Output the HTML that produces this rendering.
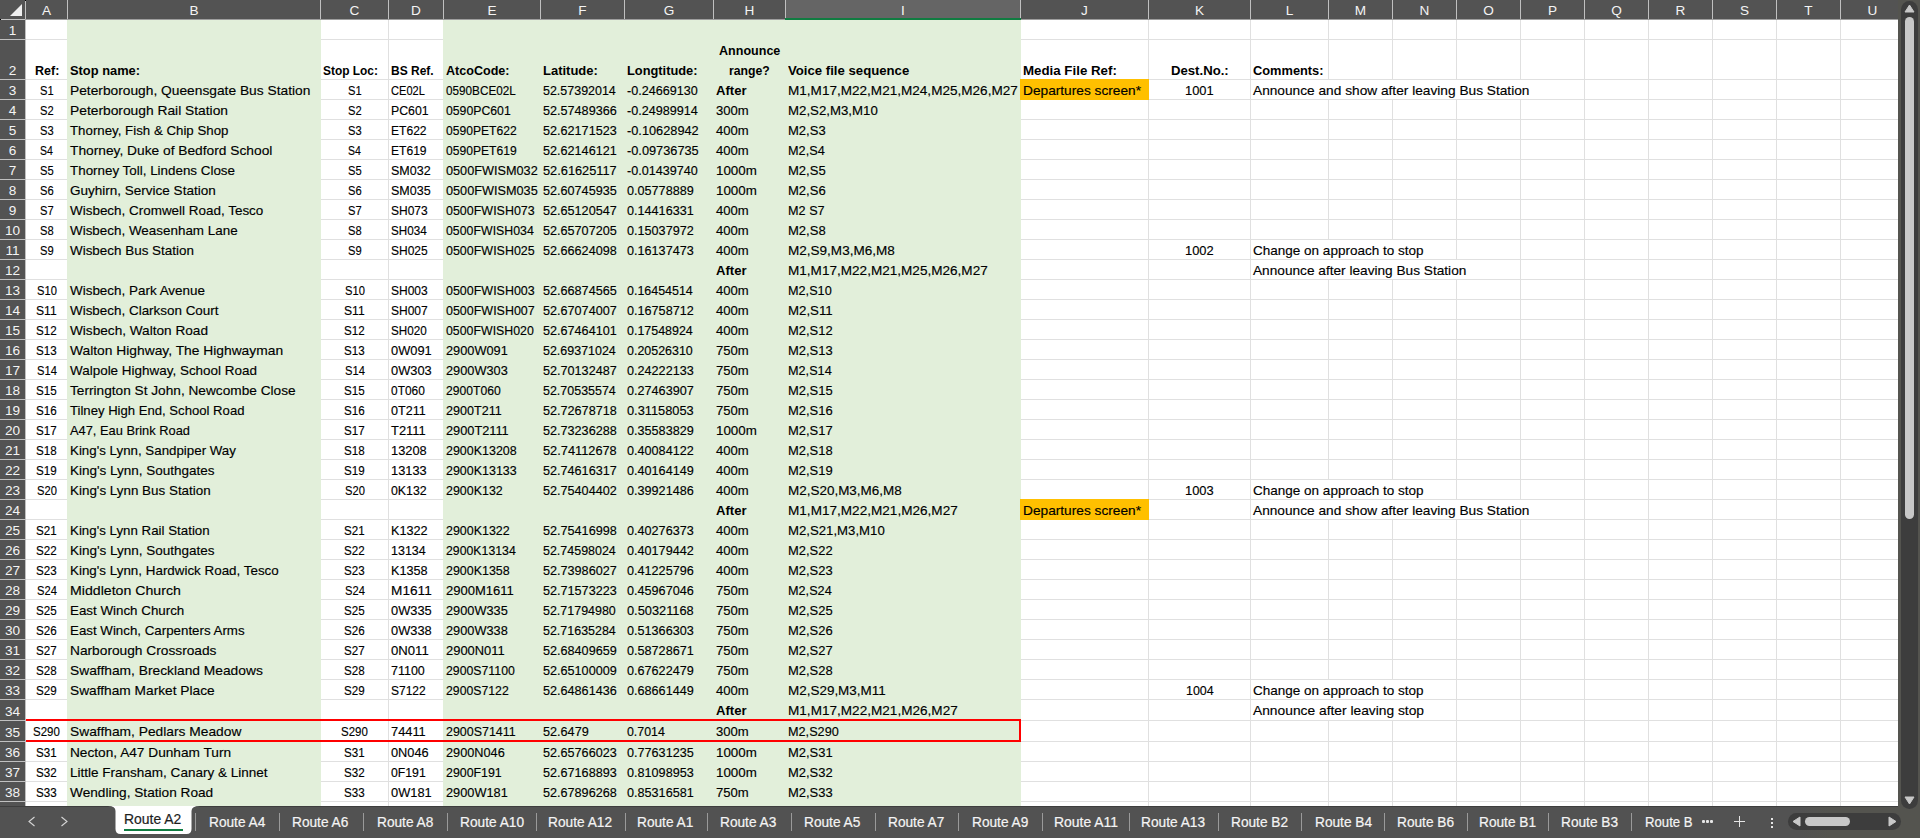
<!DOCTYPE html>
<html><head><meta charset="utf-8"><style>
*{margin:0;padding:0;box-sizing:border-box}
html,body{width:1920px;height:838px;overflow:hidden;background:#505050}
body{position:relative;font-family:"Liberation Sans", sans-serif}
body>div,#tabs>div{position:absolute}
.hl{position:absolute;top:0;height:19px;line-height:20px;text-align:center;color:#f4f4f4;font-size:13.6px}
.rn{position:absolute;left:0;width:25px;height:20px;line-height:20px;text-align:center;color:#f4f4f4;font-size:13.6px}
.ct{position:absolute;height:20px;line-height:20px;white-space:nowrap;color:#000;font-size:13.6px;transform-origin:0 0}
.ct{-webkit-text-stroke:0.15px #000}
.ct.b{font-weight:bold;-webkit-text-stroke:0}
.cc{text-align:center}
.tab{position:absolute;height:32px;line-height:32px;white-space:nowrap;color:#f4f4f4;font-size:14px;transform-origin:0 0}
.tab{-webkit-text-stroke:0.2px #f4f4f4}
.tab.act{color:#1e1e1e;line-height:26px;-webkit-text-stroke:0.2px #1e1e1e}
</style></head>
<body>
<div style="left:0px;top:0px;width:1898px;height:20px;background:#535353;"></div>
<div style="left:0px;top:20px;width:26px;height:786px;background:#535353;"></div>
<div style="left:26px;top:20px;width:1872px;height:786px;background:#ffffff;"></div>
<div style="left:26px;top:39px;width:1872px;height:1px;background:#e0e0e0;"></div>
<div style="left:26px;top:79px;width:1872px;height:1px;background:#e0e0e0;"></div>
<div style="left:26px;top:99px;width:1872px;height:1px;background:#e0e0e0;"></div>
<div style="left:26px;top:119px;width:1872px;height:1px;background:#e0e0e0;"></div>
<div style="left:26px;top:139px;width:1872px;height:1px;background:#e0e0e0;"></div>
<div style="left:26px;top:159px;width:1872px;height:1px;background:#e0e0e0;"></div>
<div style="left:26px;top:179px;width:1872px;height:1px;background:#e0e0e0;"></div>
<div style="left:26px;top:199px;width:1872px;height:1px;background:#e0e0e0;"></div>
<div style="left:26px;top:219px;width:1872px;height:1px;background:#e0e0e0;"></div>
<div style="left:26px;top:239px;width:1872px;height:1px;background:#e0e0e0;"></div>
<div style="left:26px;top:259px;width:1872px;height:1px;background:#e0e0e0;"></div>
<div style="left:26px;top:279px;width:1872px;height:1px;background:#e0e0e0;"></div>
<div style="left:26px;top:299px;width:1872px;height:1px;background:#e0e0e0;"></div>
<div style="left:26px;top:319px;width:1872px;height:1px;background:#e0e0e0;"></div>
<div style="left:26px;top:339px;width:1872px;height:1px;background:#e0e0e0;"></div>
<div style="left:26px;top:359px;width:1872px;height:1px;background:#e0e0e0;"></div>
<div style="left:26px;top:379px;width:1872px;height:1px;background:#e0e0e0;"></div>
<div style="left:26px;top:399px;width:1872px;height:1px;background:#e0e0e0;"></div>
<div style="left:26px;top:419px;width:1872px;height:1px;background:#e0e0e0;"></div>
<div style="left:26px;top:439px;width:1872px;height:1px;background:#e0e0e0;"></div>
<div style="left:26px;top:459px;width:1872px;height:1px;background:#e0e0e0;"></div>
<div style="left:26px;top:479px;width:1872px;height:1px;background:#e0e0e0;"></div>
<div style="left:26px;top:499px;width:1872px;height:1px;background:#e0e0e0;"></div>
<div style="left:26px;top:519px;width:1872px;height:1px;background:#e0e0e0;"></div>
<div style="left:26px;top:539px;width:1872px;height:1px;background:#e0e0e0;"></div>
<div style="left:26px;top:559px;width:1872px;height:1px;background:#e0e0e0;"></div>
<div style="left:26px;top:579px;width:1872px;height:1px;background:#e0e0e0;"></div>
<div style="left:26px;top:599px;width:1872px;height:1px;background:#e0e0e0;"></div>
<div style="left:26px;top:619px;width:1872px;height:1px;background:#e0e0e0;"></div>
<div style="left:26px;top:639px;width:1872px;height:1px;background:#e0e0e0;"></div>
<div style="left:26px;top:659px;width:1872px;height:1px;background:#e0e0e0;"></div>
<div style="left:26px;top:679px;width:1872px;height:1px;background:#e0e0e0;"></div>
<div style="left:26px;top:699px;width:1872px;height:1px;background:#e0e0e0;"></div>
<div style="left:26px;top:720px;width:1872px;height:1px;background:#e0e0e0;"></div>
<div style="left:26px;top:741px;width:1872px;height:1px;background:#e0e0e0;"></div>
<div style="left:26px;top:761px;width:1872px;height:1px;background:#e0e0e0;"></div>
<div style="left:26px;top:781px;width:1872px;height:1px;background:#e0e0e0;"></div>
<div style="left:26px;top:801px;width:1872px;height:1px;background:#e0e0e0;"></div>
<div style="left:67px;top:20px;width:1px;height:786px;background:#e0e0e0;"></div>
<div style="left:320px;top:20px;width:1px;height:786px;background:#e0e0e0;"></div>
<div style="left:388px;top:20px;width:1px;height:786px;background:#e0e0e0;"></div>
<div style="left:443px;top:20px;width:1px;height:786px;background:#e0e0e0;"></div>
<div style="left:540px;top:20px;width:1px;height:786px;background:#e0e0e0;"></div>
<div style="left:624px;top:20px;width:1px;height:786px;background:#e0e0e0;"></div>
<div style="left:713px;top:20px;width:1px;height:786px;background:#e0e0e0;"></div>
<div style="left:785px;top:20px;width:1px;height:786px;background:#e0e0e0;"></div>
<div style="left:1020px;top:20px;width:1px;height:786px;background:#e0e0e0;"></div>
<div style="left:1148px;top:20px;width:1px;height:786px;background:#e0e0e0;"></div>
<div style="left:1250px;top:20px;width:1px;height:786px;background:#e0e0e0;"></div>
<div style="left:1328px;top:20px;width:1px;height:786px;background:#e0e0e0;"></div>
<div style="left:1392px;top:20px;width:1px;height:786px;background:#e0e0e0;"></div>
<div style="left:1456px;top:20px;width:1px;height:786px;background:#e0e0e0;"></div>
<div style="left:1520px;top:20px;width:1px;height:786px;background:#e0e0e0;"></div>
<div style="left:1584px;top:20px;width:1px;height:786px;background:#e0e0e0;"></div>
<div style="left:1648px;top:20px;width:1px;height:786px;background:#e0e0e0;"></div>
<div style="left:1712px;top:20px;width:1px;height:786px;background:#e0e0e0;"></div>
<div style="left:1776px;top:20px;width:1px;height:786px;background:#e0e0e0;"></div>
<div style="left:1840px;top:20px;width:1px;height:786px;background:#e0e0e0;"></div>
<div style="left:1328px;top:80px;width:1px;height:19px;background:#ffffff;"></div>
<div style="left:1392px;top:80px;width:1px;height:19px;background:#ffffff;"></div>
<div style="left:1456px;top:80px;width:1px;height:19px;background:#ffffff;"></div>
<div style="left:1520px;top:80px;width:1px;height:19px;background:#ffffff;"></div>
<div style="left:1328px;top:240px;width:1px;height:19px;background:#ffffff;"></div>
<div style="left:1392px;top:240px;width:1px;height:19px;background:#ffffff;"></div>
<div style="left:1328px;top:260px;width:1px;height:19px;background:#ffffff;"></div>
<div style="left:1392px;top:260px;width:1px;height:19px;background:#ffffff;"></div>
<div style="left:1456px;top:260px;width:1px;height:19px;background:#ffffff;"></div>
<div style="left:1328px;top:480px;width:1px;height:19px;background:#ffffff;"></div>
<div style="left:1392px;top:480px;width:1px;height:19px;background:#ffffff;"></div>
<div style="left:1328px;top:500px;width:1px;height:19px;background:#ffffff;"></div>
<div style="left:1392px;top:500px;width:1px;height:19px;background:#ffffff;"></div>
<div style="left:1456px;top:500px;width:1px;height:19px;background:#ffffff;"></div>
<div style="left:1520px;top:500px;width:1px;height:19px;background:#ffffff;"></div>
<div style="left:1328px;top:680px;width:1px;height:19px;background:#ffffff;"></div>
<div style="left:1392px;top:680px;width:1px;height:19px;background:#ffffff;"></div>
<div style="left:1328px;top:700px;width:1px;height:20px;background:#ffffff;"></div>
<div style="left:1392px;top:700px;width:1px;height:20px;background:#ffffff;"></div>
<div style="left:67px;top:20px;width:254px;height:786px;background:#e2efda;"></div>
<div style="left:443px;top:20px;width:578px;height:786px;background:#e2efda;"></div>
<div style="left:1020px;top:79px;width:129px;height:21px;background:#ffc000;"></div>
<div style="left:1020px;top:499px;width:129px;height:21px;background:#ffc000;"></div>
<div style="left:26px;top:719px;width:995px;height:2px;background:#ff0000;"></div>
<div style="left:26px;top:740px;width:995px;height:2px;background:#ff0000;"></div>
<div style="left:1019px;top:719px;width:2px;height:23px;background:#ff0000;"></div>
<div style="left:785px;top:0px;width:235px;height:19px;background:#656565;"></div>
<div style="left:67px;top:0px;width:1px;height:19px;background:#c0c0c0;"></div>
<div class="hl" style="top:1px;left:26px;width:41px">A</div>
<div style="left:320px;top:0px;width:1px;height:19px;background:#c0c0c0;"></div>
<div class="hl" style="top:1px;left:68px;width:252px">B</div>
<div style="left:388px;top:0px;width:1px;height:19px;background:#c0c0c0;"></div>
<div class="hl" style="top:1px;left:321px;width:67px">C</div>
<div style="left:443px;top:0px;width:1px;height:19px;background:#c0c0c0;"></div>
<div class="hl" style="top:1px;left:389px;width:54px">D</div>
<div style="left:540px;top:0px;width:1px;height:19px;background:#c0c0c0;"></div>
<div class="hl" style="top:1px;left:444px;width:96px">E</div>
<div style="left:624px;top:0px;width:1px;height:19px;background:#c0c0c0;"></div>
<div class="hl" style="top:1px;left:541px;width:83px">F</div>
<div style="left:713px;top:0px;width:1px;height:19px;background:#c0c0c0;"></div>
<div class="hl" style="top:1px;left:625px;width:88px">G</div>
<div style="left:785px;top:0px;width:1px;height:19px;background:#c0c0c0;"></div>
<div class="hl" style="top:1px;left:714px;width:71px">H</div>
<div style="left:1020px;top:0px;width:1px;height:19px;background:#c0c0c0;"></div>
<div class="hl" style="top:1px;left:786px;width:234px">I</div>
<div style="left:1148px;top:0px;width:1px;height:19px;background:#c0c0c0;"></div>
<div class="hl" style="top:1px;left:1021px;width:127px">J</div>
<div style="left:1250px;top:0px;width:1px;height:19px;background:#c0c0c0;"></div>
<div class="hl" style="top:1px;left:1149px;width:101px">K</div>
<div style="left:1328px;top:0px;width:1px;height:19px;background:#c0c0c0;"></div>
<div class="hl" style="top:1px;left:1251px;width:77px">L</div>
<div style="left:1392px;top:0px;width:1px;height:19px;background:#c0c0c0;"></div>
<div class="hl" style="top:1px;left:1329px;width:63px">M</div>
<div style="left:1456px;top:0px;width:1px;height:19px;background:#c0c0c0;"></div>
<div class="hl" style="top:1px;left:1393px;width:63px">N</div>
<div style="left:1520px;top:0px;width:1px;height:19px;background:#c0c0c0;"></div>
<div class="hl" style="top:1px;left:1457px;width:63px">O</div>
<div style="left:1584px;top:0px;width:1px;height:19px;background:#c0c0c0;"></div>
<div class="hl" style="top:1px;left:1521px;width:63px">P</div>
<div style="left:1648px;top:0px;width:1px;height:19px;background:#c0c0c0;"></div>
<div class="hl" style="top:1px;left:1585px;width:63px">Q</div>
<div style="left:1712px;top:0px;width:1px;height:19px;background:#c0c0c0;"></div>
<div class="hl" style="top:1px;left:1649px;width:63px">R</div>
<div style="left:1776px;top:0px;width:1px;height:19px;background:#c0c0c0;"></div>
<div class="hl" style="top:1px;left:1713px;width:63px">S</div>
<div style="left:1840px;top:0px;width:1px;height:19px;background:#c0c0c0;"></div>
<div class="hl" style="top:1px;left:1777px;width:63px">T</div>
<div class="hl" style="top:1px;left:1841px;width:63px">U</div>
<div style="left:25px;top:0px;width:1px;height:19px;background:#c0c0c0;"></div>
<div style="left:0px;top:19px;width:1898px;height:1px;background:#9e9e9e;"></div>
<div style="left:785px;top:18px;width:236px;height:2px;background:#107c41;"></div>
<div style="left:0px;top:19px;width:25px;height:1px;background:#c4c4c4;"></div>
<div style="left:25px;top:0px;width:1px;height:1px;background:#000000;"></div>
<div style="left:0px;top:19px;width:1px;height:1px;background:#000000;"></div>
<svg style="position:absolute;left:0;top:0" width="25" height="19"><polygon points="10,16 22,16 22,4" fill="#efefef"/></svg>
<div style="left:0px;top:39px;width:25px;height:1px;background:#c0c0c0;"></div>
<div class="rn" style="top:21px">1</div>
<div style="left:0px;top:79px;width:25px;height:1px;background:#c0c0c0;"></div>
<div class="rn" style="top:61px">2</div>
<div style="left:0px;top:99px;width:25px;height:1px;background:#c0c0c0;"></div>
<div class="rn" style="top:81px">3</div>
<div style="left:0px;top:119px;width:25px;height:1px;background:#c0c0c0;"></div>
<div class="rn" style="top:101px">4</div>
<div style="left:0px;top:139px;width:25px;height:1px;background:#c0c0c0;"></div>
<div class="rn" style="top:121px">5</div>
<div style="left:0px;top:159px;width:25px;height:1px;background:#c0c0c0;"></div>
<div class="rn" style="top:141px">6</div>
<div style="left:0px;top:179px;width:25px;height:1px;background:#c0c0c0;"></div>
<div class="rn" style="top:161px">7</div>
<div style="left:0px;top:199px;width:25px;height:1px;background:#c0c0c0;"></div>
<div class="rn" style="top:181px">8</div>
<div style="left:0px;top:219px;width:25px;height:1px;background:#c0c0c0;"></div>
<div class="rn" style="top:201px">9</div>
<div style="left:0px;top:239px;width:25px;height:1px;background:#c0c0c0;"></div>
<div class="rn" style="top:221px">10</div>
<div style="left:0px;top:259px;width:25px;height:1px;background:#c0c0c0;"></div>
<div class="rn" style="top:241px">11</div>
<div style="left:0px;top:279px;width:25px;height:1px;background:#c0c0c0;"></div>
<div class="rn" style="top:261px">12</div>
<div style="left:0px;top:299px;width:25px;height:1px;background:#c0c0c0;"></div>
<div class="rn" style="top:281px">13</div>
<div style="left:0px;top:319px;width:25px;height:1px;background:#c0c0c0;"></div>
<div class="rn" style="top:301px">14</div>
<div style="left:0px;top:339px;width:25px;height:1px;background:#c0c0c0;"></div>
<div class="rn" style="top:321px">15</div>
<div style="left:0px;top:359px;width:25px;height:1px;background:#c0c0c0;"></div>
<div class="rn" style="top:341px">16</div>
<div style="left:0px;top:379px;width:25px;height:1px;background:#c0c0c0;"></div>
<div class="rn" style="top:361px">17</div>
<div style="left:0px;top:399px;width:25px;height:1px;background:#c0c0c0;"></div>
<div class="rn" style="top:381px">18</div>
<div style="left:0px;top:419px;width:25px;height:1px;background:#c0c0c0;"></div>
<div class="rn" style="top:401px">19</div>
<div style="left:0px;top:439px;width:25px;height:1px;background:#c0c0c0;"></div>
<div class="rn" style="top:421px">20</div>
<div style="left:0px;top:459px;width:25px;height:1px;background:#c0c0c0;"></div>
<div class="rn" style="top:441px">21</div>
<div style="left:0px;top:479px;width:25px;height:1px;background:#c0c0c0;"></div>
<div class="rn" style="top:461px">22</div>
<div style="left:0px;top:499px;width:25px;height:1px;background:#c0c0c0;"></div>
<div class="rn" style="top:481px">23</div>
<div style="left:0px;top:519px;width:25px;height:1px;background:#c0c0c0;"></div>
<div class="rn" style="top:501px">24</div>
<div style="left:0px;top:539px;width:25px;height:1px;background:#c0c0c0;"></div>
<div class="rn" style="top:521px">25</div>
<div style="left:0px;top:559px;width:25px;height:1px;background:#c0c0c0;"></div>
<div class="rn" style="top:541px">26</div>
<div style="left:0px;top:579px;width:25px;height:1px;background:#c0c0c0;"></div>
<div class="rn" style="top:561px">27</div>
<div style="left:0px;top:599px;width:25px;height:1px;background:#c0c0c0;"></div>
<div class="rn" style="top:581px">28</div>
<div style="left:0px;top:619px;width:25px;height:1px;background:#c0c0c0;"></div>
<div class="rn" style="top:601px">29</div>
<div style="left:0px;top:639px;width:25px;height:1px;background:#c0c0c0;"></div>
<div class="rn" style="top:621px">30</div>
<div style="left:0px;top:659px;width:25px;height:1px;background:#c0c0c0;"></div>
<div class="rn" style="top:641px">31</div>
<div style="left:0px;top:679px;width:25px;height:1px;background:#c0c0c0;"></div>
<div class="rn" style="top:661px">32</div>
<div style="left:0px;top:699px;width:25px;height:1px;background:#c0c0c0;"></div>
<div class="rn" style="top:681px">33</div>
<div style="left:0px;top:720px;width:25px;height:1px;background:#c0c0c0;"></div>
<div class="rn" style="top:702px">34</div>
<div style="left:0px;top:741px;width:25px;height:1px;background:#c0c0c0;"></div>
<div class="rn" style="top:723px">35</div>
<div style="left:0px;top:761px;width:25px;height:1px;background:#c0c0c0;"></div>
<div class="rn" style="top:743px">36</div>
<div style="left:0px;top:781px;width:25px;height:1px;background:#c0c0c0;"></div>
<div class="rn" style="top:763px">37</div>
<div style="left:0px;top:801px;width:25px;height:1px;background:#c0c0c0;"></div>
<div class="rn" style="top:783px">38</div>
<div class="rn" style="top:803px">39</div>
<div style="left:25px;top:20px;width:1px;height:786px;background:#c0c0c0;"></div>
<div class="ct b" style="left:34.60px;top:61px;transform:scaleX(0.9188)">Ref:</div>
<div class="ct b" style="left:70.03px;top:61px;transform:scaleX(0.9457)">Stop name:</div>
<div class="ct b" style="left:323.06px;top:61px;transform:scaleX(0.8770)">Stop Loc:</div>
<div class="ct b" style="left:390.60px;top:61px;transform:scaleX(0.8830)">BS Ref.</div>
<div class="ct b" style="left:446.09px;top:61px;transform:scaleX(0.9239)">AtcoCode:</div>
<div class="ct b" style="left:542.53px;top:61px;transform:scaleX(0.9541)">Latitude:</div>
<div class="ct b" style="left:626.54px;top:61px;transform:scaleX(0.9432)">Longtitude:</div>
<div class="ct b" style="left:718.62px;top:41px;transform:scaleX(0.9231)">Announce</div>
<div class="ct b" style="left:729.25px;top:61px;transform:scaleX(0.8996)">range?</div>
<div class="ct b" style="left:788.31px;top:61px;transform:scaleX(0.9689)">Voice file sequence</div>
<div class="ct b" style="left:1022.51px;top:61px;transform:scaleX(0.9780)">Media File Ref:</div>
<div class="ct b" style="left:1170.90px;top:61px;transform:scaleX(0.9672)">Dest.No.:</div>
<div class="ct b" style="left:1252.87px;top:61px;transform:scaleX(0.9428)">Comments:</div>
<div class="ct" style="left:39.90px;top:81px;transform:scaleX(0.8216)">S1</div>
<div class="ct" style="left:70.27px;top:81px;transform:scaleX(1.0128)">Peterborough, Queensgate Bus Station</div>
<div class="ct" style="left:347.90px;top:81px;transform:scaleX(0.8216)">S1</div>
<div class="ct" style="left:390.84px;top:81px;transform:scaleX(0.8142)">CE02L</div>
<div class="ct" style="left:445.94px;top:81px;transform:scaleX(0.8633)">0590BCE02L</div>
<div class="ct" style="left:542.90px;top:81px;transform:scaleX(0.9171)">52.57392014</div>
<div class="ct" style="left:626.84px;top:81px;transform:scaleX(0.9273)">-0.24669130</div>
<div class="ct b" style="left:716.07px;top:81px;transform:scaleX(0.9636)">After</div>
<div class="ct" style="left:788.29px;top:81px;transform:scaleX(0.9971)">M1,M17,M22,M21,M24,M25,M26,M27</div>
<div class="ct" style="left:1023.28px;top:81px;transform:scaleX(1.0077)">Departures screen*</div>
<div class="ct" style="left:1184.95px;top:81px;transform:scaleX(0.9484)">1001</div>
<div class="ct" style="left:1253.37px;top:81px;transform:scaleX(1.0077)">Announce and show after leaving Bus Station</div>
<div class="ct" style="left:39.90px;top:101px;transform:scaleX(0.8216)">S2</div>
<div class="ct" style="left:70.27px;top:101px;transform:scaleX(1.0150)">Peterborough Rail Station</div>
<div class="ct" style="left:347.90px;top:101px;transform:scaleX(0.8216)">S2</div>
<div class="ct" style="left:391.39px;top:101px;transform:scaleX(0.9049)">PC601</div>
<div class="ct" style="left:445.92px;top:101px;transform:scaleX(0.9011)">0590PC601</div>
<div class="ct" style="left:542.89px;top:101px;transform:scaleX(0.9287)">52.57489366</div>
<div class="ct" style="left:626.84px;top:101px;transform:scaleX(0.9273)">-0.24989914</div>
<div class="ct" style="left:715.90px;top:101px;transform:scaleX(0.9632)">300m</div>
<div class="ct" style="left:788.31px;top:101px;transform:scaleX(0.9737)">M2,S2,M3,M10</div>
<div class="ct" style="left:39.90px;top:121px;transform:scaleX(0.8216)">S3</div>
<div class="ct" style="left:70.10px;top:121px;transform:scaleX(0.9769)">Thorney, Fish &amp; Chip Shop</div>
<div class="ct" style="left:347.90px;top:121px;transform:scaleX(0.8216)">S3</div>
<div class="ct" style="left:391.41px;top:121px;transform:scaleX(0.8885)">ET622</div>
<div class="ct" style="left:445.93px;top:121px;transform:scaleX(0.8909)">0590PET622</div>
<div class="ct" style="left:542.89px;top:121px;transform:scaleX(0.9287)">52.62171523</div>
<div class="ct" style="left:626.83px;top:121px;transform:scaleX(0.9395)">-0.10628942</div>
<div class="ct" style="left:716.10px;top:121px;transform:scaleX(0.9632)">400m</div>
<div class="ct" style="left:788.33px;top:121px;transform:scaleX(0.9595)">M2,S3</div>
<div class="ct" style="left:39.90px;top:141px;transform:scaleX(0.7734)">S4</div>
<div class="ct" style="left:70.09px;top:141px;transform:scaleX(1.0118)">Thorney, Duke of Bedford School</div>
<div class="ct" style="left:347.90px;top:141px;transform:scaleX(0.7734)">S4</div>
<div class="ct" style="left:391.41px;top:141px;transform:scaleX(0.8885)">ET619</div>
<div class="ct" style="left:445.93px;top:141px;transform:scaleX(0.8909)">0590PET619</div>
<div class="ct" style="left:542.89px;top:141px;transform:scaleX(0.9287)">52.62146121</div>
<div class="ct" style="left:626.83px;top:141px;transform:scaleX(0.9395)">-0.09736735</div>
<div class="ct" style="left:716.10px;top:141px;transform:scaleX(0.9632)">400m</div>
<div class="ct" style="left:788.36px;top:141px;transform:scaleX(0.9347)">M2,S4</div>
<div class="ct" style="left:39.90px;top:161px;transform:scaleX(0.8216)">S5</div>
<div class="ct" style="left:70.10px;top:161px;transform:scaleX(0.9851)">Thorney Toll, Lindens Close</div>
<div class="ct" style="left:347.90px;top:161px;transform:scaleX(0.8216)">S5</div>
<div class="ct" style="left:390.83px;top:161px;transform:scaleX(0.9221)">SM032</div>
<div class="ct" style="left:445.90px;top:161px;transform:scaleX(0.9338)">0500FWISM032</div>
<div class="ct" style="left:542.89px;top:161px;transform:scaleX(0.9408)">52.61625117</div>
<div class="ct" style="left:626.84px;top:161px;transform:scaleX(0.9273)">-0.01439740</div>
<div class="ct" style="left:716.38px;top:161px;transform:scaleX(0.9801)">1000m</div>
<div class="ct" style="left:788.33px;top:161px;transform:scaleX(0.9595)">M2,S5</div>
<div class="ct" style="left:39.90px;top:181px;transform:scaleX(0.8216)">S6</div>
<div class="ct" style="left:69.72px;top:181px;transform:scaleX(0.9939)">Guyhirn, Service Station</div>
<div class="ct" style="left:347.90px;top:181px;transform:scaleX(0.8216)">S6</div>
<div class="ct" style="left:390.83px;top:181px;transform:scaleX(0.9221)">SM035</div>
<div class="ct" style="left:445.90px;top:181px;transform:scaleX(0.9338)">0500FWISM035</div>
<div class="ct" style="left:542.89px;top:181px;transform:scaleX(0.9287)">52.60745935</div>
<div class="ct" style="left:626.91px;top:181px;transform:scaleX(0.9290)">0.05778889</div>
<div class="ct" style="left:716.38px;top:181px;transform:scaleX(0.9801)">1000m</div>
<div class="ct" style="left:788.33px;top:181px;transform:scaleX(0.9595)">M2,S6</div>
<div class="ct" style="left:39.90px;top:201px;transform:scaleX(0.8216)">S7</div>
<div class="ct" style="left:70.34px;top:201px;transform:scaleX(0.9893)">Wisbech, Cromwell Road, Tesco</div>
<div class="ct" style="left:347.90px;top:201px;transform:scaleX(0.8216)">S7</div>
<div class="ct" style="left:390.85px;top:201px;transform:scaleX(0.8828)">SH073</div>
<div class="ct" style="left:445.91px;top:201px;transform:scaleX(0.9173)">0500FWISH073</div>
<div class="ct" style="left:542.89px;top:201px;transform:scaleX(0.9287)">52.65120547</div>
<div class="ct" style="left:626.91px;top:201px;transform:scaleX(0.9290)">0.14416331</div>
<div class="ct" style="left:716.10px;top:201px;transform:scaleX(0.9632)">400m</div>
<div class="ct" style="left:788.36px;top:201px;transform:scaleX(0.9330)">M2 S7</div>
<div class="ct" style="left:39.90px;top:221px;transform:scaleX(0.8216)">S8</div>
<div class="ct" style="left:70.34px;top:221px;transform:scaleX(0.9875)">Wisbech, Weasenham Lane</div>
<div class="ct" style="left:347.90px;top:221px;transform:scaleX(0.8216)">S8</div>
<div class="ct" style="left:390.87px;top:221px;transform:scaleX(0.8618)">SH034</div>
<div class="ct" style="left:445.92px;top:221px;transform:scaleX(0.9078)">0500FWISH034</div>
<div class="ct" style="left:542.89px;top:221px;transform:scaleX(0.9287)">52.65707205</div>
<div class="ct" style="left:626.91px;top:221px;transform:scaleX(0.9290)">0.15037972</div>
<div class="ct" style="left:716.10px;top:221px;transform:scaleX(0.9632)">400m</div>
<div class="ct" style="left:788.33px;top:221px;transform:scaleX(0.9595)">M2,S8</div>
<div class="ct" style="left:39.90px;top:241px;transform:scaleX(0.8216)">S9</div>
<div class="ct" style="left:70.34px;top:241px;transform:scaleX(0.9876)">Wisbech Bus Station</div>
<div class="ct" style="left:347.90px;top:241px;transform:scaleX(0.8216)">S9</div>
<div class="ct" style="left:390.85px;top:241px;transform:scaleX(0.8828)">SH025</div>
<div class="ct" style="left:445.91px;top:241px;transform:scaleX(0.9173)">0500FWISH025</div>
<div class="ct" style="left:542.89px;top:241px;transform:scaleX(0.9287)">52.66624098</div>
<div class="ct" style="left:626.91px;top:241px;transform:scaleX(0.9290)">0.16137473</div>
<div class="ct" style="left:716.10px;top:241px;transform:scaleX(0.9632)">400m</div>
<div class="ct" style="left:788.29px;top:241px;transform:scaleX(0.9952)">M2,S9,M3,M6,M8</div>
<div class="ct" style="left:1184.95px;top:241px;transform:scaleX(0.9484)">1002</div>
<div class="ct" style="left:1252.71px;top:241px;transform:scaleX(0.9940)">Change on approach to stop</div>
<div class="ct b" style="left:716.07px;top:261px;transform:scaleX(0.9636)">After</div>
<div class="ct" style="left:788.29px;top:261px;transform:scaleX(0.9977)">M1,M17,M22,M21,M25,M26,M27</div>
<div class="ct" style="left:1253.37px;top:261px;transform:scaleX(1.0046)">Announce after leaving Bus Station</div>
<div class="ct" style="left:37.40px;top:281px;transform:scaleX(0.8202)">S10</div>
<div class="ct" style="left:70.34px;top:281px;transform:scaleX(0.9887)">Wisbech, Park Avenue</div>
<div class="ct" style="left:345.40px;top:281px;transform:scaleX(0.8202)">S10</div>
<div class="ct" style="left:390.85px;top:281px;transform:scaleX(0.8828)">SH003</div>
<div class="ct" style="left:445.91px;top:281px;transform:scaleX(0.9173)">0500FWISH003</div>
<div class="ct" style="left:542.89px;top:281px;transform:scaleX(0.9287)">52.66874565</div>
<div class="ct" style="left:626.91px;top:281px;transform:scaleX(0.9162)">0.16454514</div>
<div class="ct" style="left:716.10px;top:281px;transform:scaleX(0.9632)">400m</div>
<div class="ct" style="left:788.36px;top:281px;transform:scaleX(0.9333)">M2,S10</div>
<div class="ct" style="left:36.40px;top:301px;transform:scaleX(0.8931)">S11</div>
<div class="ct" style="left:70.34px;top:301px;transform:scaleX(0.9878)">Wisbech, Clarkson Court</div>
<div class="ct" style="left:344.40px;top:301px;transform:scaleX(0.8931)">S11</div>
<div class="ct" style="left:390.85px;top:301px;transform:scaleX(0.8828)">SH007</div>
<div class="ct" style="left:445.91px;top:301px;transform:scaleX(0.9173)">0500FWISH007</div>
<div class="ct" style="left:542.89px;top:301px;transform:scaleX(0.9287)">52.67074007</div>
<div class="ct" style="left:626.91px;top:301px;transform:scaleX(0.9290)">0.16758712</div>
<div class="ct" style="left:716.10px;top:301px;transform:scaleX(0.9632)">400m</div>
<div class="ct" style="left:788.31px;top:301px;transform:scaleX(0.9756)">M2,S11</div>
<div class="ct" style="left:36.40px;top:321px;transform:scaleX(0.8549)">S12</div>
<div class="ct" style="left:70.34px;top:321px;transform:scaleX(1.0015)">Wisbech, Walton Road</div>
<div class="ct" style="left:344.40px;top:321px;transform:scaleX(0.8549)">S12</div>
<div class="ct" style="left:390.87px;top:321px;transform:scaleX(0.8618)">SH020</div>
<div class="ct" style="left:445.92px;top:321px;transform:scaleX(0.9078)">0500FWISH020</div>
<div class="ct" style="left:542.89px;top:321px;transform:scaleX(0.9287)">52.67464101</div>
<div class="ct" style="left:626.91px;top:321px;transform:scaleX(0.9162)">0.17548924</div>
<div class="ct" style="left:716.10px;top:321px;transform:scaleX(0.9632)">400m</div>
<div class="ct" style="left:788.34px;top:321px;transform:scaleX(0.9539)">M2,S12</div>
<div class="ct" style="left:36.40px;top:341px;transform:scaleX(0.8549)">S13</div>
<div class="ct" style="left:70.34px;top:341px;transform:scaleX(1.0156)">Walton Highway, The Highwayman</div>
<div class="ct" style="left:344.40px;top:341px;transform:scaleX(0.8549)">S13</div>
<div class="ct" style="left:390.90px;top:341px;transform:scaleX(0.9456)">0W091</div>
<div class="ct" style="left:445.76px;top:341px;transform:scaleX(0.9388)">2900W091</div>
<div class="ct" style="left:542.90px;top:341px;transform:scaleX(0.9171)">52.69371024</div>
<div class="ct" style="left:626.91px;top:341px;transform:scaleX(0.9162)">0.20526310</div>
<div class="ct" style="left:715.73px;top:341px;transform:scaleX(0.9632)">750m</div>
<div class="ct" style="left:788.34px;top:341px;transform:scaleX(0.9539)">M2,S13</div>
<div class="ct" style="left:37.40px;top:361px;transform:scaleX(0.8202)">S14</div>
<div class="ct" style="left:70.34px;top:361px;transform:scaleX(0.9897)">Walpole Highway, School Road</div>
<div class="ct" style="left:345.40px;top:361px;transform:scaleX(0.8202)">S14</div>
<div class="ct" style="left:390.90px;top:361px;transform:scaleX(0.9456)">0W303</div>
<div class="ct" style="left:445.76px;top:361px;transform:scaleX(0.9388)">2900W303</div>
<div class="ct" style="left:542.89px;top:361px;transform:scaleX(0.9287)">52.70132487</div>
<div class="ct" style="left:626.91px;top:361px;transform:scaleX(0.9290)">0.24222133</div>
<div class="ct" style="left:715.73px;top:361px;transform:scaleX(0.9632)">750m</div>
<div class="ct" style="left:788.36px;top:361px;transform:scaleX(0.9333)">M2,S14</div>
<div class="ct" style="left:36.40px;top:381px;transform:scaleX(0.8549)">S15</div>
<div class="ct" style="left:70.09px;top:381px;transform:scaleX(1.0052)">Terrington St John, Newcombe Close</div>
<div class="ct" style="left:344.40px;top:381px;transform:scaleX(0.8549)">S15</div>
<div class="ct" style="left:390.93px;top:381px;transform:scaleX(0.8773)">0T060</div>
<div class="ct" style="left:445.79px;top:381px;transform:scaleX(0.8952)">2900T060</div>
<div class="ct" style="left:542.90px;top:381px;transform:scaleX(0.9171)">52.70535574</div>
<div class="ct" style="left:626.91px;top:381px;transform:scaleX(0.9290)">0.27463907</div>
<div class="ct" style="left:715.73px;top:381px;transform:scaleX(0.9632)">750m</div>
<div class="ct" style="left:788.34px;top:381px;transform:scaleX(0.9539)">M2,S15</div>
<div class="ct" style="left:36.40px;top:401px;transform:scaleX(0.8549)">S16</div>
<div class="ct" style="left:70.11px;top:401px;transform:scaleX(0.9647)">Tilney High End, School Road</div>
<div class="ct" style="left:344.40px;top:401px;transform:scaleX(0.8549)">S16</div>
<div class="ct" style="left:390.91px;top:401px;transform:scaleX(0.9250)">0T211</div>
<div class="ct" style="left:445.77px;top:401px;transform:scaleX(0.9253)">2900T211</div>
<div class="ct" style="left:542.89px;top:401px;transform:scaleX(0.9287)">52.72678718</div>
<div class="ct" style="left:626.90px;top:401px;transform:scaleX(0.9424)">0.31158053</div>
<div class="ct" style="left:715.73px;top:401px;transform:scaleX(0.9632)">750m</div>
<div class="ct" style="left:788.34px;top:401px;transform:scaleX(0.9539)">M2,S16</div>
<div class="ct" style="left:36.40px;top:421px;transform:scaleX(0.8549)">S17</div>
<div class="ct" style="left:70.37px;top:421px;transform:scaleX(0.9449)">A47, Eau Brink Road</div>
<div class="ct" style="left:344.40px;top:421px;transform:scaleX(0.8549)">S17</div>
<div class="ct" style="left:391.11px;top:421px;transform:scaleX(0.9509)">T2111</div>
<div class="ct" style="left:445.76px;top:421px;transform:scaleX(0.9395)">2900T2111</div>
<div class="ct" style="left:542.89px;top:421px;transform:scaleX(0.9287)">52.73236288</div>
<div class="ct" style="left:626.91px;top:421px;transform:scaleX(0.9290)">0.35583829</div>
<div class="ct" style="left:716.38px;top:421px;transform:scaleX(0.9801)">1000m</div>
<div class="ct" style="left:788.34px;top:421px;transform:scaleX(0.9539)">M2,S17</div>
<div class="ct" style="left:36.40px;top:441px;transform:scaleX(0.8549)">S18</div>
<div class="ct" style="left:70.31px;top:441px;transform:scaleX(0.9798)">King&#x27;s Lynn, Sandpiper Way</div>
<div class="ct" style="left:344.40px;top:441px;transform:scaleX(0.8549)">S18</div>
<div class="ct" style="left:391.42px;top:441px;transform:scaleX(0.9437)">13208</div>
<div class="ct" style="left:445.77px;top:441px;transform:scaleX(0.9171)">2900K13208</div>
<div class="ct" style="left:542.89px;top:441px;transform:scaleX(0.9408)">52.74112678</div>
<div class="ct" style="left:626.91px;top:441px;transform:scaleX(0.9290)">0.40084122</div>
<div class="ct" style="left:716.10px;top:441px;transform:scaleX(0.9632)">400m</div>
<div class="ct" style="left:788.34px;top:441px;transform:scaleX(0.9539)">M2,S18</div>
<div class="ct" style="left:36.40px;top:461px;transform:scaleX(0.8549)">S19</div>
<div class="ct" style="left:70.29px;top:461px;transform:scaleX(0.9920)">King&#x27;s Lynn, Southgates</div>
<div class="ct" style="left:344.40px;top:461px;transform:scaleX(0.8549)">S19</div>
<div class="ct" style="left:391.42px;top:461px;transform:scaleX(0.9437)">13133</div>
<div class="ct" style="left:445.77px;top:461px;transform:scaleX(0.9171)">2900K13133</div>
<div class="ct" style="left:542.89px;top:461px;transform:scaleX(0.9287)">52.74616317</div>
<div class="ct" style="left:626.91px;top:461px;transform:scaleX(0.9290)">0.40164149</div>
<div class="ct" style="left:716.10px;top:461px;transform:scaleX(0.9632)">400m</div>
<div class="ct" style="left:788.34px;top:461px;transform:scaleX(0.9539)">M2,S19</div>
<div class="ct" style="left:37.40px;top:481px;transform:scaleX(0.8202)">S20</div>
<div class="ct" style="left:70.30px;top:481px;transform:scaleX(0.9862)">King&#x27;s Lynn Bus Station</div>
<div class="ct" style="left:345.40px;top:481px;transform:scaleX(0.8202)">S20</div>
<div class="ct" style="left:390.92px;top:481px;transform:scaleX(0.9084)">0K132</div>
<div class="ct" style="left:445.77px;top:481px;transform:scaleX(0.9149)">2900K132</div>
<div class="ct" style="left:542.89px;top:481px;transform:scaleX(0.9287)">52.75404402</div>
<div class="ct" style="left:626.91px;top:481px;transform:scaleX(0.9290)">0.39921486</div>
<div class="ct" style="left:716.10px;top:481px;transform:scaleX(0.9632)">400m</div>
<div class="ct" style="left:788.29px;top:481px;transform:scaleX(0.9906)">M2,S20,M3,M6,M8</div>
<div class="ct" style="left:1184.95px;top:481px;transform:scaleX(0.9484)">1003</div>
<div class="ct" style="left:1252.71px;top:481px;transform:scaleX(0.9940)">Change on approach to stop</div>
<div class="ct b" style="left:716.07px;top:501px;transform:scaleX(0.9636)">After</div>
<div class="ct" style="left:788.29px;top:501px;transform:scaleX(0.9986)">M1,M17,M22,M21,M26,M27</div>
<div class="ct" style="left:1023.28px;top:501px;transform:scaleX(1.0077)">Departures screen*</div>
<div class="ct" style="left:1253.37px;top:501px;transform:scaleX(1.0077)">Announce and show after leaving Bus Station</div>
<div class="ct" style="left:36.40px;top:521px;transform:scaleX(0.8549)">S21</div>
<div class="ct" style="left:70.31px;top:521px;transform:scaleX(0.9790)">King&#x27;s Lynn Rail Station</div>
<div class="ct" style="left:344.40px;top:521px;transform:scaleX(0.8549)">S21</div>
<div class="ct" style="left:391.36px;top:521px;transform:scaleX(0.9325)">K1322</div>
<div class="ct" style="left:445.77px;top:521px;transform:scaleX(0.9161)">2900K1322</div>
<div class="ct" style="left:542.89px;top:521px;transform:scaleX(0.9287)">52.75416998</div>
<div class="ct" style="left:626.91px;top:521px;transform:scaleX(0.9290)">0.40276373</div>
<div class="ct" style="left:716.10px;top:521px;transform:scaleX(0.9632)">400m</div>
<div class="ct" style="left:788.32px;top:521px;transform:scaleX(0.9701)">M2,S21,M3,M10</div>
<div class="ct" style="left:36.40px;top:541px;transform:scaleX(0.8549)">S22</div>
<div class="ct" style="left:70.29px;top:541px;transform:scaleX(0.9920)">King&#x27;s Lynn, Southgates</div>
<div class="ct" style="left:344.40px;top:541px;transform:scaleX(0.8549)">S22</div>
<div class="ct" style="left:391.45px;top:541px;transform:scaleX(0.9183)">13134</div>
<div class="ct" style="left:445.78px;top:541px;transform:scaleX(0.9052)">2900K13134</div>
<div class="ct" style="left:542.90px;top:541px;transform:scaleX(0.9171)">52.74598024</div>
<div class="ct" style="left:626.91px;top:541px;transform:scaleX(0.9290)">0.40179442</div>
<div class="ct" style="left:716.10px;top:541px;transform:scaleX(0.9632)">400m</div>
<div class="ct" style="left:788.34px;top:541px;transform:scaleX(0.9539)">M2,S22</div>
<div class="ct" style="left:36.40px;top:561px;transform:scaleX(0.8549)">S23</div>
<div class="ct" style="left:70.30px;top:561px;transform:scaleX(0.9851)">King&#x27;s Lynn, Hardwick Road, Tesco</div>
<div class="ct" style="left:344.40px;top:561px;transform:scaleX(0.8549)">S23</div>
<div class="ct" style="left:391.36px;top:561px;transform:scaleX(0.9325)">K1358</div>
<div class="ct" style="left:445.77px;top:561px;transform:scaleX(0.9161)">2900K1358</div>
<div class="ct" style="left:542.89px;top:561px;transform:scaleX(0.9287)">52.73986027</div>
<div class="ct" style="left:626.91px;top:561px;transform:scaleX(0.9290)">0.41225796</div>
<div class="ct" style="left:716.10px;top:561px;transform:scaleX(0.9632)">400m</div>
<div class="ct" style="left:788.34px;top:561px;transform:scaleX(0.9539)">M2,S23</div>
<div class="ct" style="left:37.40px;top:581px;transform:scaleX(0.8202)">S24</div>
<div class="ct" style="left:70.24px;top:581px;transform:scaleX(1.0408)">Middleton Church</div>
<div class="ct" style="left:345.40px;top:581px;transform:scaleX(0.8202)">S24</div>
<div class="ct" style="left:391.28px;top:581px;transform:scaleX(1.0053)">M1611</div>
<div class="ct" style="left:445.75px;top:581px;transform:scaleX(0.9568)">2900M1611</div>
<div class="ct" style="left:542.89px;top:581px;transform:scaleX(0.9287)">52.71573223</div>
<div class="ct" style="left:626.91px;top:581px;transform:scaleX(0.9290)">0.45967046</div>
<div class="ct" style="left:715.73px;top:581px;transform:scaleX(0.9632)">750m</div>
<div class="ct" style="left:788.36px;top:581px;transform:scaleX(0.9333)">M2,S24</div>
<div class="ct" style="left:36.40px;top:601px;transform:scaleX(0.8549)">S25</div>
<div class="ct" style="left:70.30px;top:601px;transform:scaleX(0.9824)">East Winch Church</div>
<div class="ct" style="left:344.40px;top:601px;transform:scaleX(0.8549)">S25</div>
<div class="ct" style="left:390.90px;top:601px;transform:scaleX(0.9456)">0W335</div>
<div class="ct" style="left:445.76px;top:601px;transform:scaleX(0.9388)">2900W335</div>
<div class="ct" style="left:542.90px;top:601px;transform:scaleX(0.9171)">52.71794980</div>
<div class="ct" style="left:626.90px;top:601px;transform:scaleX(0.9424)">0.50321168</div>
<div class="ct" style="left:715.73px;top:601px;transform:scaleX(0.9632)">750m</div>
<div class="ct" style="left:788.34px;top:601px;transform:scaleX(0.9539)">M2,S25</div>
<div class="ct" style="left:36.40px;top:621px;transform:scaleX(0.8549)">S26</div>
<div class="ct" style="left:70.31px;top:621px;transform:scaleX(0.9793)">East Winch, Carpenters Arms</div>
<div class="ct" style="left:344.40px;top:621px;transform:scaleX(0.8549)">S26</div>
<div class="ct" style="left:390.90px;top:621px;transform:scaleX(0.9456)">0W338</div>
<div class="ct" style="left:445.76px;top:621px;transform:scaleX(0.9388)">2900W338</div>
<div class="ct" style="left:542.90px;top:621px;transform:scaleX(0.9171)">52.71635284</div>
<div class="ct" style="left:626.91px;top:621px;transform:scaleX(0.9290)">0.51366303</div>
<div class="ct" style="left:715.73px;top:621px;transform:scaleX(0.9632)">750m</div>
<div class="ct" style="left:788.34px;top:621px;transform:scaleX(0.9539)">M2,S26</div>
<div class="ct" style="left:36.40px;top:641px;transform:scaleX(0.8549)">S27</div>
<div class="ct" style="left:70.27px;top:641px;transform:scaleX(1.0096)">Narborough Crossroads</div>
<div class="ct" style="left:344.40px;top:641px;transform:scaleX(0.8549)">S27</div>
<div class="ct" style="left:390.89px;top:641px;transform:scaleX(0.9665)">0N011</div>
<div class="ct" style="left:445.75px;top:641px;transform:scaleX(0.9515)">2900N011</div>
<div class="ct" style="left:542.89px;top:641px;transform:scaleX(0.9287)">52.68409659</div>
<div class="ct" style="left:626.91px;top:641px;transform:scaleX(0.9290)">0.58728671</div>
<div class="ct" style="left:715.73px;top:641px;transform:scaleX(0.9632)">750m</div>
<div class="ct" style="left:788.34px;top:641px;transform:scaleX(0.9539)">M2,S27</div>
<div class="ct" style="left:36.40px;top:661px;transform:scaleX(0.8549)">S28</div>
<div class="ct" style="left:69.77px;top:661px;transform:scaleX(1.0138)">Swaffham, Breckland Meadows</div>
<div class="ct" style="left:344.40px;top:661px;transform:scaleX(0.8549)">S28</div>
<div class="ct" style="left:390.76px;top:661px;transform:scaleX(0.9186)">71100</div>
<div class="ct" style="left:445.78px;top:661px;transform:scaleX(0.9041)">2900S71100</div>
<div class="ct" style="left:542.89px;top:661px;transform:scaleX(0.9287)">52.65100009</div>
<div class="ct" style="left:626.91px;top:661px;transform:scaleX(0.9290)">0.67622479</div>
<div class="ct" style="left:715.73px;top:661px;transform:scaleX(0.9632)">750m</div>
<div class="ct" style="left:788.34px;top:661px;transform:scaleX(0.9539)">M2,S28</div>
<div class="ct" style="left:36.40px;top:681px;transform:scaleX(0.8549)">S29</div>
<div class="ct" style="left:69.78px;top:681px;transform:scaleX(1.0095)">Swaffham Market Place</div>
<div class="ct" style="left:344.40px;top:681px;transform:scaleX(0.8549)">S29</div>
<div class="ct" style="left:390.85px;top:681px;transform:scaleX(0.8826)">S7122</div>
<div class="ct" style="left:445.78px;top:681px;transform:scaleX(0.9016)">2900S7122</div>
<div class="ct" style="left:542.89px;top:681px;transform:scaleX(0.9287)">52.64861436</div>
<div class="ct" style="left:626.91px;top:681px;transform:scaleX(0.9290)">0.68661449</div>
<div class="ct" style="left:716.10px;top:681px;transform:scaleX(0.9632)">400m</div>
<div class="ct" style="left:788.30px;top:681px;transform:scaleX(0.9901)">M2,S29,M3,M11</div>
<div class="ct" style="left:1185.98px;top:681px;transform:scaleX(0.9164)">1004</div>
<div class="ct" style="left:1252.71px;top:681px;transform:scaleX(0.9940)">Change on approach to stop</div>
<div class="ct b" style="left:716.07px;top:701px;transform:scaleX(0.9636)">After</div>
<div class="ct" style="left:788.29px;top:701px;transform:scaleX(0.9986)">M1,M17,M22,M21,M26,M27</div>
<div class="ct" style="left:1253.37px;top:701px;transform:scaleX(1.0147)">Announce after leaving stop</div>
<div class="ct" style="left:32.90px;top:722px;transform:scaleX(0.8451)">S290</div>
<div class="ct" style="left:69.77px;top:722px;transform:scaleX(1.0141)">Swaffham, Pedlars Meadow</div>
<div class="ct" style="left:340.90px;top:722px;transform:scaleX(0.8451)">S290</div>
<div class="ct" style="left:390.74px;top:722px;transform:scaleX(0.9439)">74411</div>
<div class="ct" style="left:445.77px;top:722px;transform:scaleX(0.9161)">2900S71411</div>
<div class="ct" style="left:542.89px;top:722px;transform:scaleX(0.9305)">52.6479</div>
<div class="ct" style="left:626.92px;top:722px;transform:scaleX(0.9091)">0.7014</div>
<div class="ct" style="left:715.90px;top:722px;transform:scaleX(0.9632)">300m</div>
<div class="ct" style="left:788.36px;top:722px;transform:scaleX(0.9323)">M2,S290</div>
<div class="ct" style="left:36.40px;top:743px;transform:scaleX(0.8549)">S31</div>
<div class="ct" style="left:70.28px;top:743px;transform:scaleX(1.0056)">Necton, A47 Dunham Turn</div>
<div class="ct" style="left:344.40px;top:743px;transform:scaleX(0.8549)">S31</div>
<div class="ct" style="left:390.90px;top:743px;transform:scaleX(0.9418)">0N046</div>
<div class="ct" style="left:445.76px;top:743px;transform:scaleX(0.9360)">2900N046</div>
<div class="ct" style="left:542.89px;top:743px;transform:scaleX(0.9287)">52.65766023</div>
<div class="ct" style="left:626.91px;top:743px;transform:scaleX(0.9290)">0.77631235</div>
<div class="ct" style="left:716.38px;top:743px;transform:scaleX(0.9801)">1000m</div>
<div class="ct" style="left:788.34px;top:743px;transform:scaleX(0.9539)">M2,S31</div>
<div class="ct" style="left:36.40px;top:763px;transform:scaleX(0.8549)">S32</div>
<div class="ct" style="left:70.29px;top:763px;transform:scaleX(0.9939)">Little Fransham, Canary &amp; Linnet</div>
<div class="ct" style="left:344.40px;top:763px;transform:scaleX(0.8549)">S32</div>
<div class="ct" style="left:390.92px;top:763px;transform:scaleX(0.9004)">0F191</div>
<div class="ct" style="left:445.78px;top:763px;transform:scaleX(0.9099)">2900F191</div>
<div class="ct" style="left:542.89px;top:763px;transform:scaleX(0.9287)">52.67168893</div>
<div class="ct" style="left:626.91px;top:763px;transform:scaleX(0.9290)">0.81098953</div>
<div class="ct" style="left:716.38px;top:763px;transform:scaleX(0.9801)">1000m</div>
<div class="ct" style="left:788.34px;top:763px;transform:scaleX(0.9539)">M2,S32</div>
<div class="ct" style="left:36.40px;top:783px;transform:scaleX(0.8549)">S33</div>
<div class="ct" style="left:70.34px;top:783px;transform:scaleX(1.0043)">Wendling, Station Road</div>
<div class="ct" style="left:344.40px;top:783px;transform:scaleX(0.8549)">S33</div>
<div class="ct" style="left:390.90px;top:783px;transform:scaleX(0.9456)">0W181</div>
<div class="ct" style="left:445.76px;top:783px;transform:scaleX(0.9388)">2900W181</div>
<div class="ct" style="left:542.89px;top:783px;transform:scaleX(0.9287)">52.67896268</div>
<div class="ct" style="left:626.91px;top:783px;transform:scaleX(0.9290)">0.85316581</div>
<div class="ct" style="left:715.73px;top:783px;transform:scaleX(0.9632)">750m</div>
<div class="ct" style="left:788.34px;top:783px;transform:scaleX(0.9539)">M2,S33</div>
<div style="left:0;top:806px;width:1920px;height:32px;background:linear-gradient(90deg,#525252 0px,#525252 1800px,#54544f 1830px)"></div>
<div style="left:0;top:806px;width:1898px;height:1px;background:#3e3e3e"></div>
<svg style="position:absolute;left:0;top:806px" width="100" height="32"><path d="M34.5,11 L29,15.5 L34.5,20" stroke="#d6d6d6" stroke-width="1.1" fill="none"/><path d="M61.5,11 L67,15.5 L61.5,20" stroke="#d6d6d6" stroke-width="1.1" fill="none"/></svg>
<svg style="position:absolute;left:108px;top:806px" width="92" height="32"><path d="M0,0 L92,0 Q83.5,0 83.5,5 L83.5,23 Q83.5,28 78.5,28 L12.5,28 Q7.5,28 7.5,23 L7.5,5 Q7.5,0 0,0 Z" fill="#ffffff"/></svg>
<div style="left:124px;top:829px;width:59px;height:2px;background:#107c41"></div>
<div class="tab act" style="left:123.70px;top:806px;transform:scaleX(0.9950);">Route A2</div>
<div id="tabs">
<div class="tab" style="left:208.72px;top:806px;transform:scaleX(0.9777);">Route A4</div>
<div class="tab" style="left:292.32px;top:806px;transform:scaleX(0.9777);">Route A6</div>
<div class="tab" style="left:376.52px;top:806px;transform:scaleX(0.9777);">Route A8</div>
<div class="tab" style="left:459.52px;top:806px;transform:scaleX(0.9790);">Route A10</div>
<div class="tab" style="left:548.32px;top:806px;transform:scaleX(0.9790);">Route A12</div>
<div class="tab" style="left:637.27px;top:806px;transform:scaleX(0.9777);">Route A1</div>
<div class="tab" style="left:720.27px;top:806px;transform:scaleX(0.9777);">Route A3</div>
<div class="tab" style="left:804.02px;top:806px;transform:scaleX(0.9777);">Route A5</div>
<div class="tab" style="left:888.27px;top:806px;transform:scaleX(0.9777);">Route A7</div>
<div class="tab" style="left:971.52px;top:806px;transform:scaleX(0.9777);">Route A9</div>
<div class="tab" style="left:1053.51px;top:806px;transform:scaleX(0.9948);">Route A11</div>
<div class="tab" style="left:1141.02px;top:806px;transform:scaleX(0.9790);">Route A13</div>
<div class="tab" style="left:1231.02px;top:806px;transform:scaleX(0.9777);">Route B2</div>
<div class="tab" style="left:1314.52px;top:806px;transform:scaleX(0.9777);">Route B4</div>
<div class="tab" style="left:1397.27px;top:806px;transform:scaleX(0.9777);">Route B6</div>
<div class="tab" style="left:1479.02px;top:806px;transform:scaleX(0.9777);">Route B1</div>
<div class="tab" style="left:1561.02px;top:806px;transform:scaleX(0.9777);">Route B3</div>
<div class="tab" style="left:1644.86px;top:806px;transform:scaleX(0.9401);">Route B</div>
</div>
<div style="left:195px;top:813px;width:1px;height:18px;background:#9a9a9a"></div>
<div style="left:279px;top:813px;width:1px;height:18px;background:#9a9a9a"></div>
<div style="left:363px;top:813px;width:1px;height:18px;background:#9a9a9a"></div>
<div style="left:447px;top:813px;width:1px;height:18px;background:#9a9a9a"></div>
<div style="left:536px;top:813px;width:1px;height:18px;background:#9a9a9a"></div>
<div style="left:625px;top:813px;width:1px;height:18px;background:#9a9a9a"></div>
<div style="left:707px;top:813px;width:1px;height:18px;background:#9a9a9a"></div>
<div style="left:791px;top:813px;width:1px;height:18px;background:#9a9a9a"></div>
<div style="left:875px;top:813px;width:1px;height:18px;background:#9a9a9a"></div>
<div style="left:958px;top:813px;width:1px;height:18px;background:#9a9a9a"></div>
<div style="left:1042px;top:813px;width:1px;height:18px;background:#9a9a9a"></div>
<div style="left:1129px;top:813px;width:1px;height:18px;background:#9a9a9a"></div>
<div style="left:1218px;top:813px;width:1px;height:18px;background:#9a9a9a"></div>
<div style="left:1301px;top:813px;width:1px;height:18px;background:#9a9a9a"></div>
<div style="left:1384px;top:813px;width:1px;height:18px;background:#9a9a9a"></div>
<div style="left:1467px;top:813px;width:1px;height:18px;background:#9a9a9a"></div>
<div style="left:1548px;top:813px;width:1px;height:18px;background:#9a9a9a"></div>
<div style="left:1631px;top:813px;width:1px;height:18px;background:#9a9a9a"></div>
<svg style="position:absolute;left:1690px;top:806px" width="100" height="32" fill="#e6e6e6"><rect x="12" y="14" width="3" height="3" rx="1"/><rect x="16" y="14" width="3" height="3" rx="1"/><rect x="20" y="14" width="3" height="3" rx="1"/><rect x="44" y="15" width="11" height="1"/><rect x="49" y="10" width="1" height="11"/><rect x="81" y="12" width="2" height="2"/><rect x="81" y="16" width="2" height="2"/><rect x="81" y="20" width="2" height="2"/></svg>
<div style="left:1898px;top:0;width:22px;height:838px;background:#54544f"></div>
<div style="left:1901px;top:1px;width:17px;height:808px;background:#3d3d3d;border-radius:8.5px"></div>
<svg style="position:absolute;left:1898px;top:0" width="22" height="838" fill="#c8c8c8"><path d="M7,12 L16,12 L11.5,5 Z" stroke="#c8c8c8" stroke-width="1" stroke-linejoin="round"/><path d="M7,797 L16,797 L11.5,804 Z" stroke="#c8c8c8" stroke-width="1" stroke-linejoin="round"/></svg>
<div style="left:1905px;top:17px;width:9px;height:502px;background:#c8c8c8;border-radius:4.5px"></div>
<div style="left:1788px;top:813px;width:113px;height:17px;background:#3d3d3d;border-radius:8.5px"></div>
<svg style="position:absolute;left:1780px;top:806px" width="140" height="32" fill="#c8c8c8"><path d="M20,11 L20,20 L13,15.5 Z" stroke="#c8c8c8" stroke-width="1" stroke-linejoin="round"/><path d="M109,11 L109,20 L116,15.5 Z" stroke="#c8c8c8" stroke-width="1" stroke-linejoin="round"/></svg>
<div style="left:1805px;top:817px;width:45px;height:9px;background:#c8c8c8;border-radius:4.5px"></div>
</body></html>
